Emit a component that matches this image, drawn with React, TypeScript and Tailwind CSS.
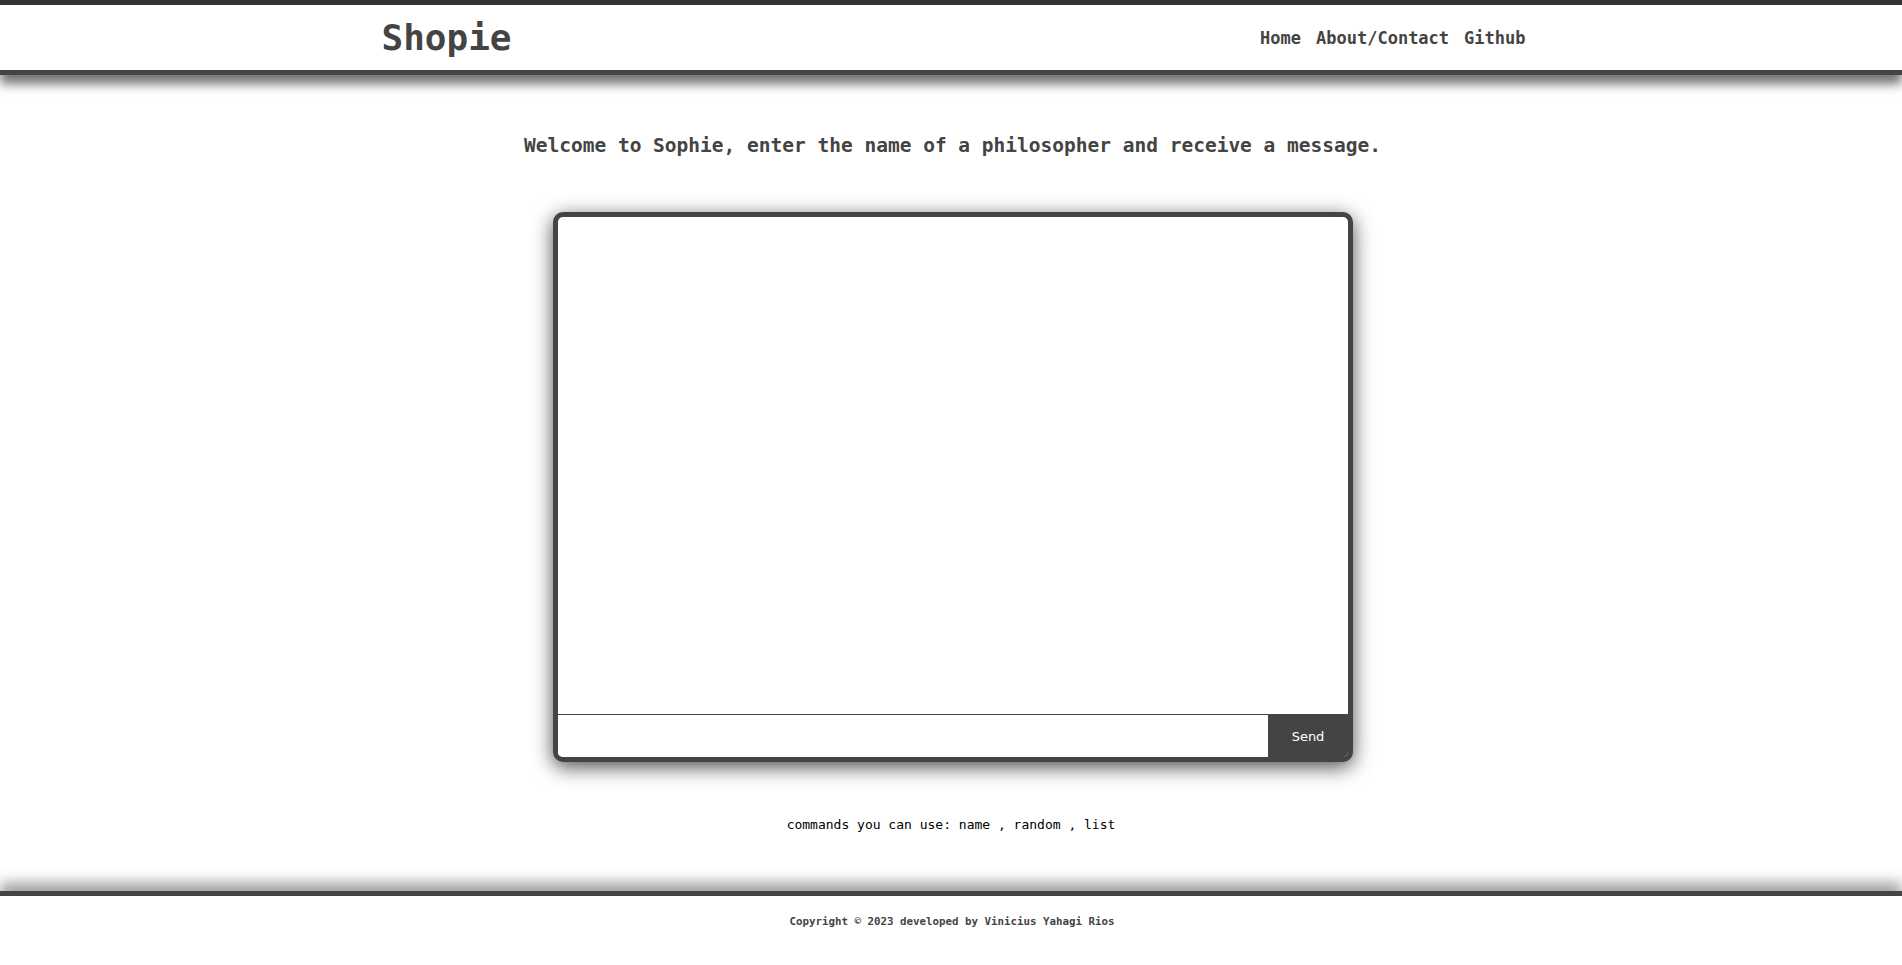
const mono = { fontFamily: '"DejaVu Sans Mono", "Liberation Mono", monospace' }

function Header() {
  return (
    <header className="relative z-10 border-t-[5px] border-b-[5px] border-t-[#333] border-b-[#444] bg-white shadow-[0_9px_10px_rgba(0,0,0,0.55)]">
      <div className="mx-auto flex h-[65px] w-[1149px] items-center justify-between pl-[5px]">
        <h1 className="text-[36px] font-bold text-[#444]">Shopie</h1>
        <nav className="flex gap-[15px] pt-[2px] text-[17px] font-bold text-[#444]">
          <a href="#">Home</a>
          <a href="#">About/Contact</a>
          <a href="#">Github</a>
        </nav>
      </div>
    </header>
  )
}

function ChatBox() {
  return (
    <div className="w-[800px] overflow-hidden rounded-[10px] border-[5px] border-[#444] bg-white shadow-[0_5px_20px_rgba(0,0,0,0.7)]">
      <div className="h-[498px] border-b border-[#444]" />
      <form className="flex h-[42px]" onSubmit={e => e.preventDefault()}>
        <input className="flex-1 bg-white px-2 outline-none" type="text" />
        <button
          type="submit"
          className="w-[80px] bg-[#444] text-[13px] text-white"
          style={{ fontFamily: '"DejaVu Sans", sans-serif' }}
        >
          Send
        </button>
      </form>
    </div>
  )
}

export default function App() {
  return (
    <div className="flex min-h-[965px] flex-col bg-white" style={mono}>
      <Header />
      <main className="flex flex-1 flex-col items-center">
        <p className="mt-[56px] pl-[3px] text-[19.5px] font-bold text-[#444]">
          Welcome to Sophie, enter the name of a philosopher and receive a message.
        </p>
        <div className="ml-[4px] mt-[52px]">
          <ChatBox />
        </div>
        <p className="mt-[53px] text-[13px] text-black">
          commands you can use: name , random , list
        </p>
      </main>
      <footer className="mt-[56px] h-[74px] border-t-[5px] border-[#444] bg-white pt-[18px] text-center shadow-[0_-9px_12px_rgba(0,0,0,0.35)]">
        <p className="pl-[2px] text-[10.8px] font-bold text-[#444]">
          Copyright © 2023 developed by Vinicius Yahagi Rios
        </p>
      </footer>
    </div>
  )
}
